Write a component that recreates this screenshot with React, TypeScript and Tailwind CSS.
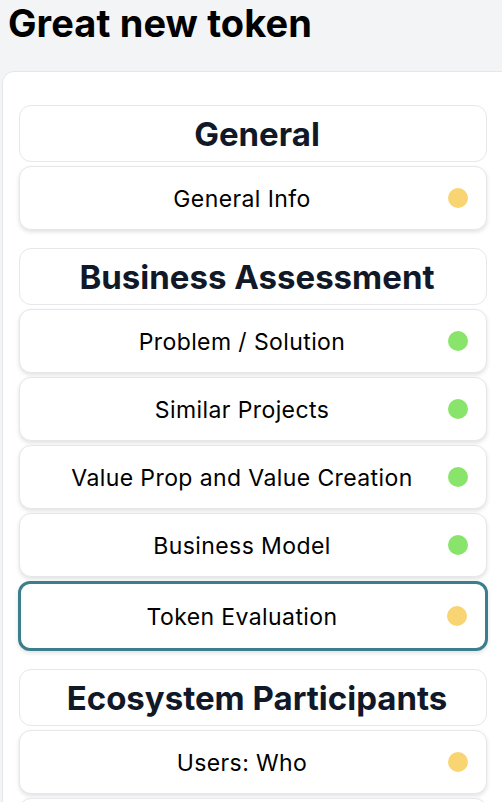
const sections = [
  {
    title: 'General',
    items: [{ label: 'General Info', status: 'pending' }],
  },
  {
    title: 'Business Assessment',
    items: [
      { label: 'Problem / Solution', status: 'done' },
      { label: 'Similar Projects', status: 'done' },
      { label: 'Value Prop and Value Creation', status: 'done' },
      { label: 'Business Model', status: 'done' },
      { label: 'Token Evaluation', status: 'pending', active: true },
    ],
  },
  {
    title: 'Ecosystem Participants',
    items: [
      { label: 'Users: Who', status: 'pending' },
      { label: 'Users: Why', status: 'pending' },
    ],
  },
];

function StepRow({ label, status, active }: { label: string; status: string; active?: boolean }) {
  return (
    <div
      className={`flex items-center rounded-xl bg-white pl-4 pr-[18px] shadow-[0_2px_4px_rgba(0,0,0,0.12)] ${
        active ? 'h-[70px] -mx-px border-[3px] border-[#3b7f8c]' : 'h-16 border border-[#e5e7eb]'
      }`}
    >
      <span className="flex-1 pt-[3px] text-center text-[23px] leading-none text-black tracking-[0.4px] whitespace-nowrap">
        {label}
      </span>
      <span className={`w-5 h-5 shrink-0 rounded-full ${status === 'done' ? 'bg-[#88e46b]' : 'bg-[#f8d572]'}`} />
    </div>
  );
}

export default function App() {
  return (
    <div className="h-screen bg-[#f3f4f6] font-['Inter',sans-serif] overflow-hidden">
      <h1 className="px-2 pt-[1px] h-[71px] text-[38px] font-bold text-black leading-[44px] tracking-[0.1px]">
        Great new token
      </h1>
      <div className="ml-[2px] -mr-4 rounded-tl-xl border border-[#e5e7eb] bg-white pl-4 pr-[30px] pt-[33px]">
        <div className="flex flex-col gap-[18px]">
          {sections.map((s) => (
            <div key={s.title} className="flex flex-col gap-1">
              {/* section header */}
              <div className="h-[57px] flex items-center justify-center pl-2 pt-[2px] rounded-xl border border-[#e5e7eb] bg-white">
                <h2 className="text-[33px] font-bold text-[#111827] whitespace-nowrap">{s.title}</h2>
              </div>
              {s.items.map((it) => (
                <StepRow key={it.label} {...it} />
              ))}
            </div>
          ))}
        </div>
      </div>
    </div>
  );
}
